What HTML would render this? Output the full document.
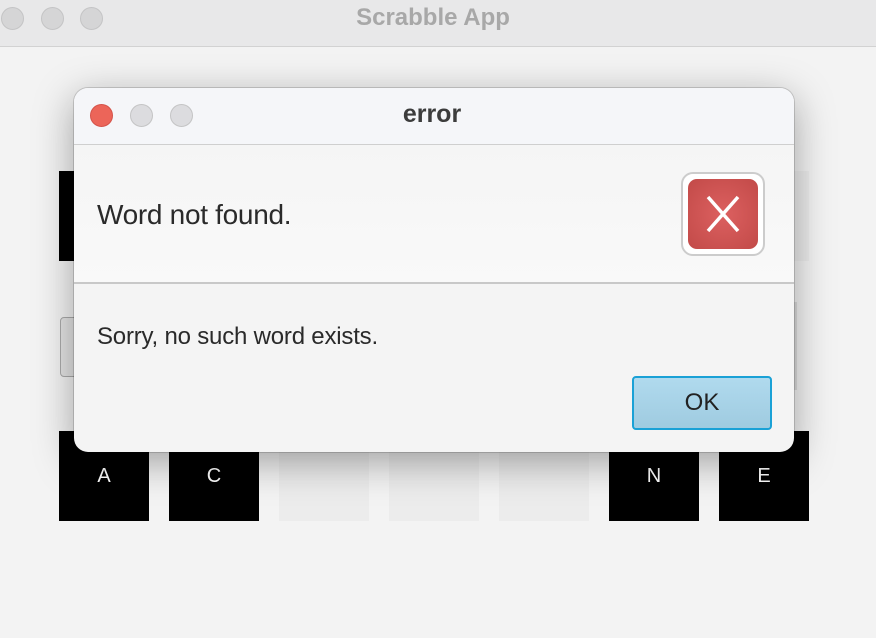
<!DOCTYPE html>
<html><head><style>
body{margin:0;width:876px;height:638px;background:#f3f3f3;font-family:"Liberation Sans",sans-serif;position:relative;overflow:hidden}
.tb{position:absolute;left:0;top:0;width:876px;height:46px;background:#e8e8e9;border-bottom:1px solid #d2d2d2}
.dot{position:absolute;width:23px;height:23px;border-radius:50%;box-sizing:border-box}
.g{background:#d5d5d6;border:1px solid #c4c4c5}
.t{position:absolute;width:90px;height:90px;color:#fff;font-size:20px;display:flex;align-items:center;justify-content:center}
.b{background:#000}.l{background:#ececec}
.dlg{position:absolute;left:74px;top:88px;width:720px;height:364px;border-radius:14px;background:#f4f4f4;box-shadow:0 10px 40px rgba(0,0,0,.35),0 0 0 1px rgba(0,0,0,.15);overflow:hidden}
</style></head><body>
<div class="tb">
<div class="dot g" style="left:1px;top:7px"></div>
<div class="dot g" style="left:41px;top:7px"></div>
<div class="dot g" style="left:80px;top:7px"></div>
<div style="position:absolute;left:0;width:866px;top:4px;text-align:center;font-weight:bold;font-size:24px;color:#a8a8a8">Scrabble App</div>
</div>
<div class="t b" style="left:59px;top:171px"></div>
<div class="t l" style="left:719px;top:171px"></div>
<div style="position:absolute;left:60px;top:317px;width:40px;height:58px;border:1px solid #aaa;border-radius:4px;background:#e4e4e4"></div>
<div style="position:absolute;left:760px;top:302px;width:37px;height:88px;background:#ddd"></div>
<div class="t b" style="left:59px;top:431px">A</div>
<div class="t b" style="left:169px;top:431px">C</div>
<div class="t l" style="left:279px;top:431px"></div>
<div class="t l" style="left:389px;top:431px"></div>
<div class="t l" style="left:499px;top:431px"></div>
<div class="t b" style="left:609px;top:431px">N</div>
<div class="t b" style="left:719px;top:431px">E</div>
<div class="dlg">
<div style="position:absolute;left:0;top:0;width:720px;height:56px;background:#f5f6f9;border-bottom:1px solid #cfcfcf"></div>
<div class="dot" style="left:16px;top:16px;background:#ec6559;border:1px solid #d4534a"></div>
<div class="dot g" style="left:56px;top:16px;background:#dcdcdf"></div>
<div class="dot g" style="left:96px;top:16px;background:#dcdcdf"></div>
<div style="position:absolute;left:0;width:716px;top:12px;text-align:center;font-weight:bold;font-size:25px;color:#3c3c3c">error</div>
<div style="position:absolute;left:0;top:57px;width:720px;height:137px;background:linear-gradient(#f5f5f5,#f9f9f9);border-bottom:2px solid #c8c8c8"></div>
<div style="position:absolute;left:23px;top:111px;font-size:28px;color:#2a2a2a;letter-spacing:-0.3px">Word not found.</div>
<div style="position:absolute;left:607px;top:84px;width:84px;height:84px;box-sizing:border-box;border:2px solid #ccc;border-radius:12px;background:#fff">
<div style="position:absolute;left:5px;top:5px;width:70px;height:70px;border-radius:9px;background:radial-gradient(circle,#dc6060,#c24a48)">
<svg width="70" height="70" viewBox="0 0 70 70"><path d="M20 18L50 52M50 18L20 52" stroke="#fff" stroke-width="3.5"/></svg></div></div>
<div style="position:absolute;left:23px;top:235px;font-size:24px;color:#2a2a2a;letter-spacing:-0.2px">Sorry, no such word exists.</div>
<div style="position:absolute;left:558px;top:288px;width:140px;height:54px;box-sizing:border-box;border:2px solid #1aa1d6;border-radius:4px;background:linear-gradient(#b0daee,#9fcbe0);font-size:24px;color:#222;display:flex;align-items:center;justify-content:center">OK</div>
</div>
</body></html>
